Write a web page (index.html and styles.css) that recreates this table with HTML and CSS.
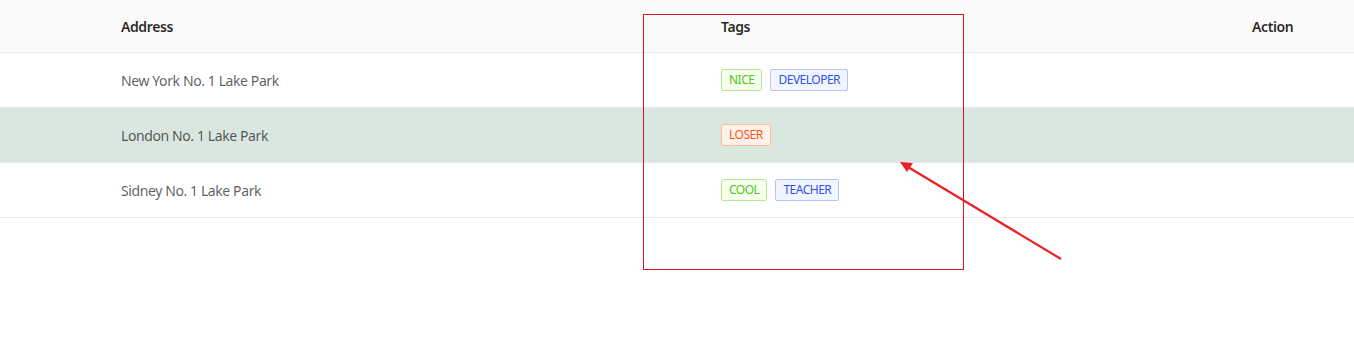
FILE: index.html
```html
<!DOCTYPE html>
<html>
<head>
<meta charset="utf-8">
<link rel="stylesheet" href="styles.css">
</head>
<body>
<div class="page">
  <div class="table">
    <div class="row head">
      <div class="cell"></div>
      <div class="cell">Address</div>
      <div class="cell">Tags</div>
      <div class="cell">Action</div>
    </div>
    <div class="row">
      <div class="cell"></div>
      <div class="cell">New York No. 1 Lake Park</div>
      <div class="cell tags"><span class="tag green">NICE</span><span class="tag blue">DEVELOPER</span></div>
      <div class="cell"></div>
    </div>
    <div class="row hl">
      <div class="cell"></div>
      <div class="cell">London No. 1 Lake Park</div>
      <div class="cell tags"><span class="tag volcano">LOSER</span></div>
      <div class="cell"></div>
    </div>
    <div class="row">
      <div class="cell"></div>
      <div class="cell">Sidney No. 1 Lake Park</div>
      <div class="cell tags"><span class="tag green">COOL</span><span class="tag blue">TEACHER</span></div>
      <div class="cell"></div>
    </div>
  </div>
  <svg class="annot" width="1354" height="348" viewBox="0 0 1354 348">
    <rect x="643.5" y="14.5" width="320" height="255" fill="none" stroke="#e3141e" stroke-width="1"/>
    <line x1="1061" y1="259" x2="908" y2="167" stroke="#e8202a" stroke-width="2.2"/>
    <polygon points="900,162 913,163 907,172" fill="#e8202a"/>
  </svg>
</div>
</body>
</html>
```

FILE: styles.css
```css
html, body {
  margin: 0;
  padding: 0;
  background: #fff;
}
.page {
  position: relative;
  width: 1354px;
  height: 348px;
  font-family: "Segoe UI", "Noto Sans", "Open Sans", sans-serif;
  font-size: 14px;
  letter-spacing: -0.4px;
}
.table {
  display: flex;
  flex-direction: column;
}
.row {
  display: grid;
  grid-template-columns: 105px 600px 531px 1fr;
  height: 54px;
  border-bottom: 1px solid #e8e8e8;
  color: rgba(0, 0, 0, 0.65);
  align-items: center;
}
.row.head {
  height: 52px;
  background: #fafafa;
  color: rgba(0, 0, 0, 0.85);
  font-weight: 600;
}
.row.hl {
  background: #dae6e0;
}
.cell {
  padding: 2px 16px 0;
  line-height: 22px;
}
.tags {
  display: flex;
  gap: 8px;
  padding-top: 0;
}
.tag {
  display: inline-block;
  font-size: 12px;
  letter-spacing: -0.5px;
  line-height: 20px;
  padding: 0 7px;
  border: 1px solid;
  border-radius: 2px;
}
.green {
  color: #52c41a;
  background: #f6ffed;
  border-color: #b7eb8f;
}
.blue {
  color: #2f54eb;
  background: #f0f5ff;
  border-color: #adc6ff;
}
.volcano {
  color: #fa541c;
  background: #fff2e8;
  border-color: #ffbb96;
}
.annot {
  position: absolute;
  left: 0;
  top: 0;
  pointer-events: none;
}
```
